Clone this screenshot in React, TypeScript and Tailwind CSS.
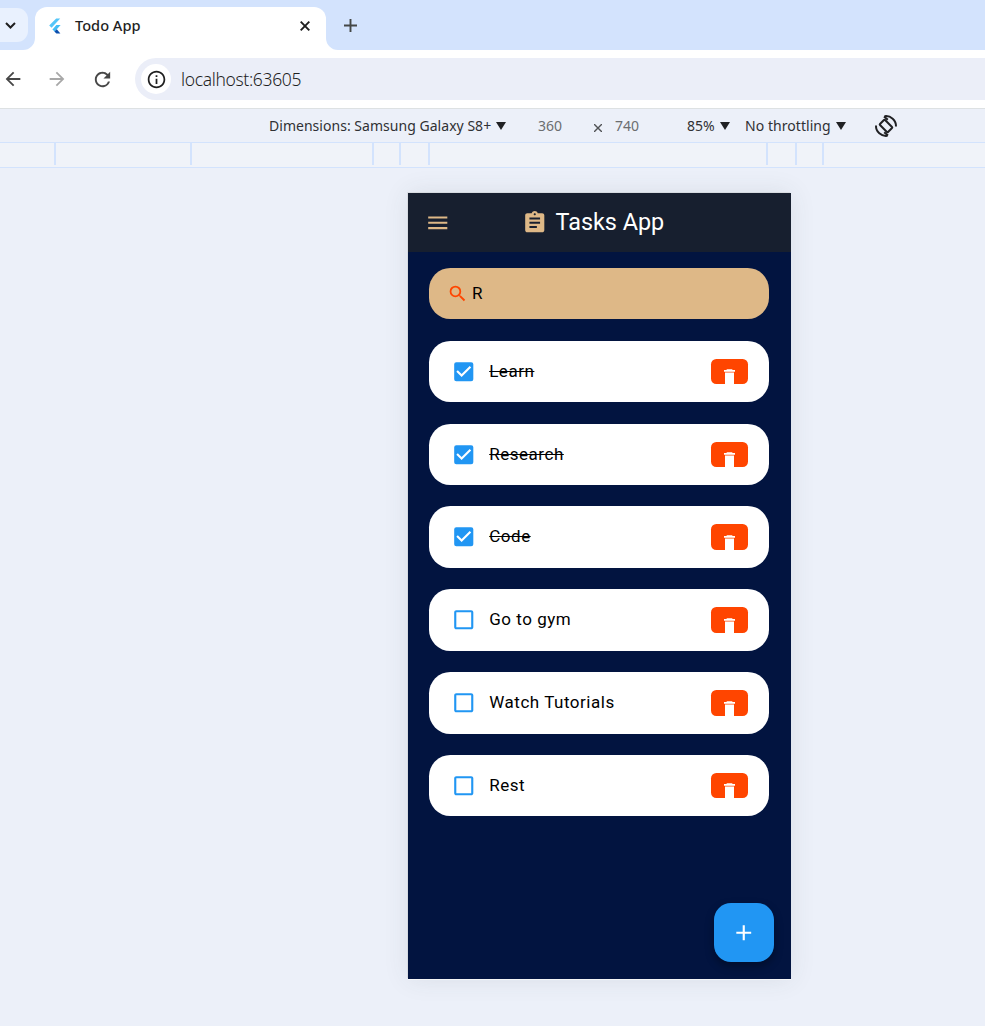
import React from "react";
import {
  MdAdd,
  MdArrowBack,
  MdArrowForward,
  MdAssignment,
  MdCheckBox,
  MdCheckBoxOutlineBlank,
  MdInfoOutline,
  MdMenu,
  MdRefresh,
  MdSearch,
} from "react-icons/md";

const tasks = [
  { title: "Learn", done: true },
  { title: "Research", done: true },
  { title: "Code", done: true },
  { title: "Go to gym", done: false },
  { title: "Watch Tutorials", done: false },
  { title: "Rest", done: false },
];

const rulerCells = [
  "w-[56px]",
  "w-[136px]",
  "w-[182px]",
  "w-[27px]",
  "w-[29px]",
  "w-[338px]",
  "w-[29px]",
  "w-[27px]",
];

function FlutterLogo() {
  return (
    <svg className="ml-[14px] h-4 w-[12px] shrink-0" viewBox="0 0 12 16">
      <path d="M7.2 0.5h4L2.6 9.8 0.2 7.6z" fill="#54c5f8" />
      <path d="M7.4 7h4.2L7.8 11.2 5.6 13.6 3.4 11.4z" fill="#42bdf5" />
      <path d="M5.4 13.4l2.4-2.2 3.6 4.2H7.4z" fill="#0a4fae" />
    </svg>
  );
}

function Caret() {
  return (
    <svg className="h-2 w-[10px] shrink-0" viewBox="0 0 10 8">
      <path d="M0 0h10L5 8z" fill="#202124" />
    </svg>
  );
}

function RotateIcon() {
  return (
    <svg className="ml-[28px] size-6 shrink-0" viewBox="0 0 24 24" fill="none" stroke="#202124" strokeWidth="2">
      <rect x="8.4" y="6.3" width="7.2" height="11.4" rx="0.8" transform="rotate(-45 12 12)" />
      <path d="M10.5 2.2A10 10 0 0 1 22 12.5" />
      <path d="M13.5 21.8A10 10 0 0 1 2 11.5" />
      <path d="M10 2.4l3.8 3.4M14 21.6l-3.8-3.4" />
    </svg>
  );
}

function TrashIcon() {
  return (
    <svg className="h-[15px] w-[11px] shrink-0" viewBox="0 0 11 15" fill="#fff">
      <path d="M3 0.3h5l0.7 0.8H11v1.6H0V1.1h2.3zM1 3.6h9V15H1z" />
    </svg>
  );
}

function TabStrip() {
  return (
    <div className="flex h-[50px] bg-[#d3e3fd]">
      <div className="mt-2 flex h-[34px] w-[28px] shrink-0 items-center rounded-r-[11px] bg-[#e9f1fe] pl-[5px]">
        <svg className="h-[7px] w-[11px]" viewBox="0 0 11 7" fill="none">
          <path d="M1 1l4.5 4.5L10 1" stroke="#1f1f1f" strokeWidth="2" />
        </svg>
      </div>
      <svg className="mt-[38px] -ml-[5px] h-3 w-3 shrink-0" viewBox="0 0 12 12">
        <path d="M12 0v12H0A12 12 0 0 0 12 0z" fill="#fff" />
      </svg>
      <div className="mt-[7px] flex h-[43px] w-[291px] shrink-0 items-center rounded-t-[12px] bg-white pb-[6px]">
        <FlutterLogo />
        <span className="ml-[14px] whitespace-nowrap font-['Noto_Sans',sans-serif] text-[14.6px] font-medium text-[#1f1f1f]">
          Todo App
        </span>
        <svg className="mr-[16px] ml-auto size-[10px]" viewBox="0 0 10 10">
          <path d="M0.7 0.7l8.6 8.6M9.3 0.7L0.7 9.3" stroke="#1f1f1f" strokeWidth="1.9" />
        </svg>
      </div>
      <svg className="mt-[38px] h-3 w-3 shrink-0" viewBox="0 0 12 12">
        <path d="M0 0v12h12A12 12 0 0 1 0 0z" fill="#fff" />
      </svg>
      <svg className="mt-[19px] ml-[6px] size-[13px]" viewBox="0 0 13 13">
        <path d="M6.5 0v13M0 6.5h13" stroke="#444746" strokeWidth="1.9" />
      </svg>
    </div>
  );
}

function Toolbar() {
  return (
    <div className="flex h-[59px] items-center border-b border-[#dde1e3] bg-white">
      <MdArrowBack className="ml-[2px] size-[22px] shrink-0 text-[#474747]" />
      <MdArrowForward className="ml-[22px] size-[22px] shrink-0 text-[#a8a8a8]" />
      <MdRefresh className="ml-[23px] size-[23px] shrink-0 text-[#474747]" />
      <div className="ml-[21px] flex h-[42px] flex-1 items-center rounded-l-full bg-[#ebeef8] pl-[6px]">
        <div className="flex size-[30px] items-center justify-center rounded-full bg-white">
          <MdInfoOutline className="size-[21px] text-[#1f1f1f]" />
        </div>
        <span className="ml-[10px] font-['Noto_Sans',sans-serif] text-[17.5px] font-light tracking-[-0.35px] text-[#1f1f1f]">
          localhost:63605
        </span>
      </div>
    </div>
  );
}

function DeviceBar() {
  return (
    <div className="flex h-[34px] items-center whitespace-nowrap border-b border-[#d3e3fd] bg-[#ecf0f9] font-['Noto_Sans',sans-serif] text-[14px] text-[#303134]">
      <span className="ml-[269px] w-[227px] tracking-[0.03px]">Dimensions: Samsung Galaxy S8+</span>
      <Caret />
      <span className="ml-[32px] w-[56px] text-[#6b6d70]">360</span>
      <svg className="mt-1 h-[8px] w-[8px]" viewBox="0 0 8 8">
        <path d="M0 0l8 8M8 0L0 8" stroke="#505255" strokeWidth="1.4" />
      </svg>
      <span className="ml-[13px] w-[72px] text-[#6b6d70]">740</span>
      <span className="w-[33px]">85%</span>
      <Caret />
      <span className="ml-[15px] w-[91px] tracking-[0.05px]">No throttling</span>
      <Caret />
      <RotateIcon />
    </div>
  );
}

function Ruler() {
  return (
    <div className="flex h-[25px] border-b border-[#d3e3fd] bg-[#f0f3f9] pb-[2px]">
      {rulerCells.map((width, i) => (
        <div key={i} className={`${width} shrink-0 border-r-2 border-[#d3e3fd]`} />
      ))}
    </div>
  );
}

function TaskRow({ title, done }: { title: string; done: boolean }) {
  const Box = done ? MdCheckBox : MdCheckBoxOutlineBlank;
  return (
    <li className="flex h-[61.6px] items-center rounded-[21.3px] bg-white pr-[21.3px] pl-[22px]">
      <Box className="size-[25.5px] shrink-0 text-[#2196f3]" />
      <span
        className={`ml-[12.5px] text-[17px] tracking-[0.53px] whitespace-nowrap text-black ${done ? "line-through decoration-1" : ""}`}
      >
        {title}
      </span>
      <button className="ml-auto flex h-[25.6px] w-[37.3px] items-start justify-center overflow-hidden rounded-[5.3px] bg-[#ff4500] pt-[10.6px]">
        <TrashIcon />
      </button>
    </li>
  );
}

function Phone() {
  return (
    <div className="relative mt-[25px] ml-[408px] flex h-[786px] w-[383px] flex-col bg-[#021440] font-['Roboto',sans-serif] shadow-[0_0_24px_rgba(60,64,67,0.10),-1px_-1px_0_#dfe2e8,0_1px_0_#ffffff]">
      <header className="flex h-[59px] shrink-0 items-center bg-[#171f2f]">
        <MdMenu className="ml-[17px] size-[25.5px] text-[#deb887]" />
        <MdAssignment className="ml-[71px] size-[25.5px] text-[#deb887]" />
        <h1 className="ml-[8.5px] text-[23.4px] leading-none whitespace-nowrap text-white">Tasks App</h1>
      </header>
      <div className="flex flex-col pr-[21.8px] pl-[21.2px] pt-[16px]">
        <div className="flex h-[51.2px] items-center rounded-[21.3px] bg-[#deb887] pl-[18px]">
          <MdSearch className="size-[21.3px] text-[#ff4500]" />
          <span className="ml-[3.5px] text-[17px] text-black">R</span>
        </div>
        <ul className="mt-[21.6px] flex flex-col gap-[21.2px]">
          {tasks.map((task) => (
            <TaskRow key={task.title} {...task} />
          ))}
        </ul>
      </div>
      <button className="absolute right-[17px] bottom-[17px] flex h-[59px] w-[60px] items-center justify-center rounded-[17px] bg-[#2196f3] shadow-[0_4px_8px_rgba(0,0,0,0.35)]">
        <MdAdd className="size-[25.5px] text-white" />
      </button>
    </div>
  );
}

export default function App() {
  return (
    <div className="flex h-[1026px] w-[985px] flex-col overflow-hidden bg-[#ecf0f9]">
      <TabStrip />
      <Toolbar />
      <DeviceBar />
      <Ruler />
      <Phone />
    </div>
  );
}
